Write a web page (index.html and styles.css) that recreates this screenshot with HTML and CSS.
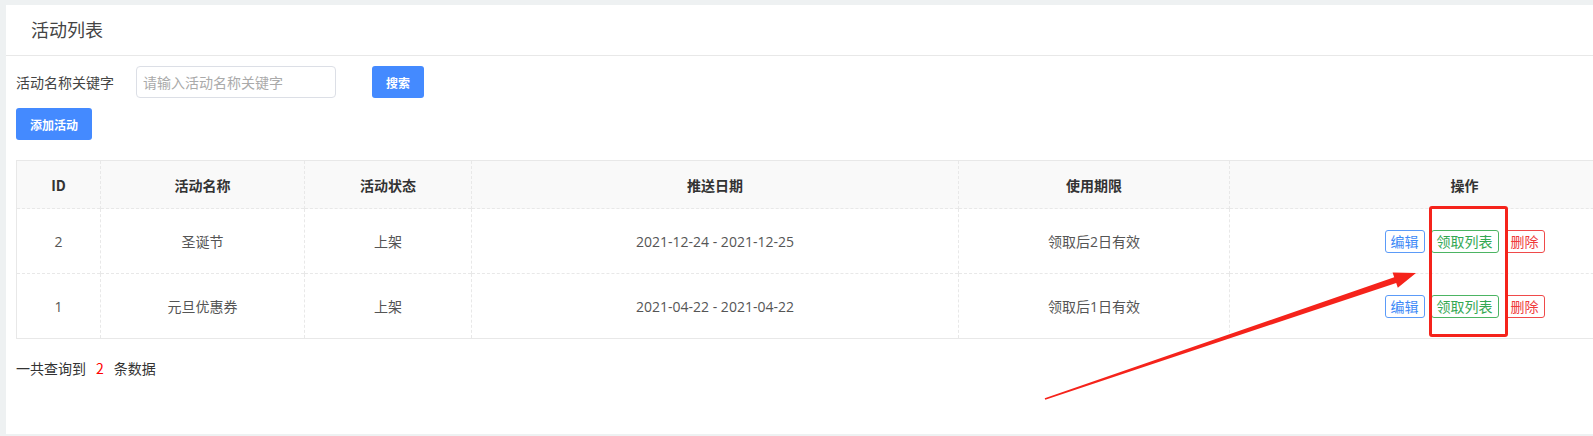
FILE: index.html
```html
<!DOCTYPE html>
<html lang="zh">
  <head>
    <meta charset="UTF-8" />
    <title>活动列表</title>
    <link rel="stylesheet" href="styles.css">
  </head>
  <body>
    <div class="tarjeta">
      <div class="cabecera">活动列表</div>

      <div class="filtros">
        <label class="etiqueta">活动名称关键字</label>
        <input type="text" class="campo" placeholder="请输入活动名称关键字" />
        <button class="btn-azul buscar" type="button">搜索</button>
      </div>
      <div class="filtros">
        <button class="btn-azul" type="button">添加活动</button>
      </div>

      <table>
        <colgroup>
          <col class="c-id" />
          <col class="c-nombre" />
          <col class="c-estado" />
          <col class="c-fecha" />
          <col class="c-plazo" />
          <col class="c-ops" />
        </colgroup>
        <thead>
          <tr>
            <th>ID</th>
            <th>活动名称</th>
            <th>活动状态</th>
            <th>推送日期</th>
            <th>使用期限</th>
            <th>操作</th>
          </tr>
        </thead>
        <tbody>
          <tr>
            <td>2</td>
            <td>圣诞节</td>
            <td>上架</td>
            <td>2021-12-24 - 2021-12-25</td>
            <td>领取后2日有效</td>
            <td>
              <div class="acciones">
                <span class="accion azul">编辑</span>
                <span class="accion verde">领取列表</span>
                <span class="accion rojo">删除</span>
              </div>
            </td>
          </tr>
          <tr>
            <td>1</td>
            <td>元旦优惠券</td>
            <td>上架</td>
            <td>2021-04-22 - 2021-04-22</td>
            <td>领取后1日有效</td>
            <td>
              <div class="acciones">
                <span class="accion azul">编辑</span>
                <span class="accion verde">领取列表</span>
                <span class="accion rojo">删除</span>
              </div>
            </td>
          </tr>
        </tbody>
      </table>

      <p class="total">一共查询到<span class="numero">2</span>条数据</p>
    </div>

    <!-- marcas de anotacion encima de la captura -->
    <div class="marco"></div>
    <svg class="flecha" width="1593" height="436" viewBox="0 0 1593 436">
      <polygon fill="#f5231b" points="1044.7,398.2 1394.2,277.3 1392.6,272.5 1416,273 1397.8,287.7 1396.2,282.9 1045.3,399.8" />
    </svg>
  </body>
</html>
```

FILE: styles.css
```css
body {
  margin: 0;
  background-color: #eef1f2;
  font-family: "Noto Sans CJK SC", "Liberation Sans", sans-serif;
  color: #555;
  overflow: hidden;
  position: relative;
}
.tarjeta {
  background: white;
  margin: 5px 0 0 6px;
  width: 1713px;
  height: 429px;
  box-sizing: border-box;
}
.cabecera {
  height: 50px;
  line-height: 49px;
  padding-left: 25px;
  font-size: 18px;
  color: #444;
  border-bottom: 1px solid #e8e8e8;
}
.filtros {
  display: flex;
  align-items: center;
  padding-left: 10px;
  margin-top: 10px;
}
.etiqueta {
  width: 120px;
  font-size: 14px;
  color: #444;
}
.campo {
  width: 200px;
  height: 32px;
  box-sizing: border-box;
  border: 1px solid #dcdfe6;
  border-radius: 4px;
  padding: 0 6px;
  font-family: inherit;
  font-size: 14px;
  outline: none;
}
.campo::placeholder {
  color: #aaa;
}
.btn-azul {
  height: 32px;
  padding: 0 14px;
  background: #448aff;
  color: white;
  border: none;
  border-radius: 3px;
  font-family: inherit;
  font-size: 12px;
  font-weight: bold;
  cursor: pointer;
}
.buscar {
  margin-left: 36px;
}
table {
  margin: 20px 0 0 10px;
  width: 1683px;
  table-layout: fixed;
  border-collapse: collapse;
  border: 1px solid #e8e8e8;
  font-size: 14px;
}
.c-id { width: 84px; }
.c-nombre { width: 204px; }
.c-estado { width: 167px; }
.c-fecha { width: 487px; }
.c-plazo { width: 271px; }
.c-ops { width: 470px; }
th,
td {
  text-align: center;
  border-left: 1px dashed #e8e8e8;
  border-top: 1px dashed #e8e8e8;
  padding: 0;
}
th {
  height: 47px;
  background-color: #f9f9f9;
  color: #333;
  font-weight: bold;
}
td {
  height: 64px;
  font-family: "Open Sans", "Noto Sans CJK SC", sans-serif;
}
.acciones {
  display: flex;
  justify-content: center;
  gap: 6px;
  font-family: "Noto Sans CJK SC", sans-serif;
}
.accion {
  display: inline-block;
  padding: 2px 5px;
  line-height: 17px;
  border: 1px solid;
  border-radius: 3px;
  font-size: 14px;
}
.azul {
  color: #3d8af7;
  border-color: #5b9bf8;
}
.verde {
  color: #34a853;
  border-color: #4cb463;
}
.rojo {
  color: #ef3b3b;
  border-color: #ef4a4a;
}
.total {
  margin: 20px 0 0 10px;
  font-size: 14px;
  line-height: 18px;
  color: #333;
}
.numero {
  color: #f00;
  margin: 0 10px;
}
.marco {
  position: absolute;
  left: 1429px;
  top: 206px;
  width: 73px;
  height: 125px;
  border: 3px solid #f5231b;
  border-radius: 3px;
}
.flecha {
  position: absolute;
  left: 0;
  top: 0;
  pointer-events: none;
}
```
